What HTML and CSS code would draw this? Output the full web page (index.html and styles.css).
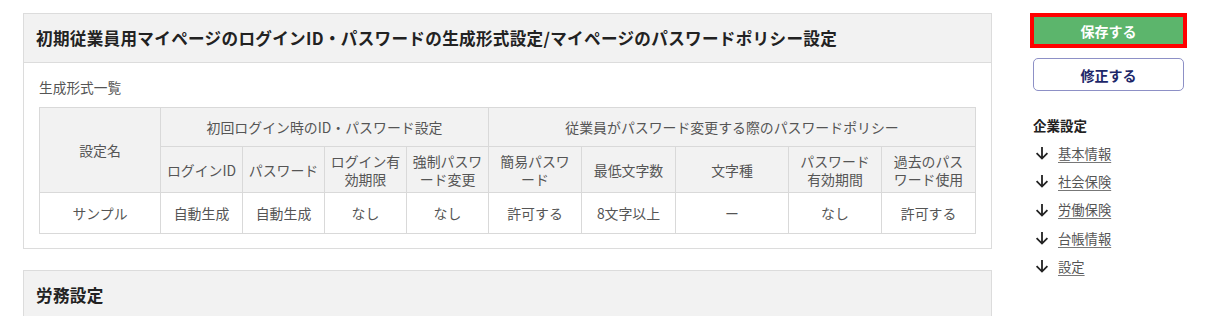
FILE: index.html
```html
<!DOCTYPE html>
<html lang="ja">
<head>
<meta charset="utf-8">
<link rel="stylesheet" href="styles.css">
</head>
<body>
<div class="page">
  <main class="main">
    <section class="card">
      <div class="card-head"><h2 class="card-title">初期従業員用マイページのログインID・パスワードの生成形式設定/マイページのパスワードポリシー設定</h2></div>
      <div class="card-body">
        <p class="label">生成形式一覧</p>
        <table class="tbl">
          <colgroup>
            <col style="width:121px"><col style="width:82px"><col style="width:82px"><col style="width:82px"><col style="width:82px">
            <col style="width:93px"><col style="width:94px"><col style="width:113px"><col style="width:93px"><col style="width:94px">
          </colgroup>
          <thead>
            <tr class="r1">
              <th rowspan="2">設定名</th>
              <th colspan="4">初回ログイン時のID・パスワード設定</th>
              <th colspan="5">従業員がパスワード変更する際のパスワードポリシー</th>
            </tr>
            <tr class="r2">
              <th>ログインID</th>
              <th>パスワード</th>
              <th>ログイン有<br>効期限</th>
              <th>強制パスワ<br>ード変更</th>
              <th>簡易パスワ<br>ード</th>
              <th>最低文字数</th>
              <th>文字種</th>
              <th>パスワード<br>有効期間</th>
              <th>過去のパス<br>ワード使用</th>
            </tr>
          </thead>
          <tbody>
            <tr class="r3">
              <td>サンプル</td>
              <td>自動生成</td>
              <td>自動生成</td>
              <td>なし</td>
              <td>なし</td>
              <td>許可する</td>
              <td>8文字以上</td>
              <td>ー</td>
              <td>なし</td>
              <td>許可する</td>
            </tr>
          </tbody>
        </table>
      </div>
    </section>
    <section class="card card2">
      <div class="card-head"><h2 class="card-title">労務設定</h2></div>
      <div class="card-body tall"></div>
    </section>
  </main>
  <aside class="side">
    <button class="btn-save" type="button">保存する</button>
    <button class="btn-edit" type="button">修正する</button>
    <h3 class="side-title">企業設定</h3>
    <ul class="side-links">
      <li><svg class="arr" viewBox="0 0 14 14" width="14" height="14"><path d="M7 1V12.6M1.6 7.2L7 12.6L12.4 7.2" fill="none" stroke="#222" stroke-width="1.8"/></svg><a href="#">基本情報</a></li>
      <li><svg class="arr" viewBox="0 0 14 14" width="14" height="14"><path d="M7 1V12.6M1.6 7.2L7 12.6L12.4 7.2" fill="none" stroke="#222" stroke-width="1.8"/></svg><a href="#">社会保険</a></li>
      <li><svg class="arr" viewBox="0 0 14 14" width="14" height="14"><path d="M7 1V12.6M1.6 7.2L7 12.6L12.4 7.2" fill="none" stroke="#222" stroke-width="1.8"/></svg><a href="#">労働保険</a></li>
      <li><svg class="arr" viewBox="0 0 14 14" width="14" height="14"><path d="M7 1V12.6M1.6 7.2L7 12.6L12.4 7.2" fill="none" stroke="#222" stroke-width="1.8"/></svg><a href="#">台帳情報</a></li>
      <li><svg class="arr" viewBox="0 0 14 14" width="14" height="14"><path d="M7 1V12.6M1.6 7.2L7 12.6L12.4 7.2" fill="none" stroke="#222" stroke-width="1.8"/></svg><a href="#">設定</a></li>
    </ul>
  </aside>
</div>
</body>
</html>
```

FILE: styles.css
```css
* { box-sizing: border-box; }
html, body { margin: 0; padding: 0; background: #fff; }
html { height: 316px; overflow: hidden; }
body {
  font-family: "Noto Sans CJK JP", "Noto Sans", sans-serif;
  color: #333;
  height: 316px;
  overflow: hidden;
}
.page {
  display: flex;
  align-items: flex-start;
  padding: 13px 0 0 23px;
  gap: 38px;
}
.main { width: 969px; flex: none; }
.card {
  border: 1px solid #dcdcdc;
  background: #fff;
}
.card2 { margin-top: 21px; }
.card-head {
  background: #f2f2f2;
  border-bottom: 1px solid #dcdcdc;
  height: 49px;
  display: flex;
  align-items: center;
  padding: 0 12px;
}
.card-title {
  margin: 0;
  font-size: 16.6px;
  font-weight: 700;
  color: #222;
  letter-spacing: 0.3px;
}
.card-body { padding: 14px 15px 14px 15px; }
.card-body.tall { height: 30px; }
.label {
  margin: 0 0 10px 0;
  font-size: 13.7px;
  line-height: 20px;
  color: #555;
}
.tbl {
  border-collapse: collapse;
  table-layout: fixed;
  width: 936px;
  font-size: 13.9px;
  color: #555;
}
.tbl th, .tbl td {
  border: 1px solid #d9d9d9;
  text-align: center;
  vertical-align: middle;
  font-weight: 400;
  padding: 0 2px;
  line-height: 18px;
}
.tbl th { background: #f2f2f2; }
.tbl td { background: #fff; }
.r1 th { height: 39px; }
.r2 th { height: 46px; }
.r3 td { height: 41px; }
.side {
  width: 157px;
  flex: none;
  display: flex;
  flex-direction: column;
}
.btn-save {
  display: block;
  width: 157px;
  height: 35px;
  background: #5cb56c;
  border: 4px solid #ff0000;
  color: #fff;
  font-family: inherit;
  font-size: 14px;
  font-weight: 700;
  padding: 0;
  cursor: pointer;
}
.btn-edit {
  display: block;
  width: 151px;
  height: 33px;
  margin: 10px 0 0 3px;
  background: #fff;
  border: 1px solid #8d90c6;
  border-radius: 5px;
  color: #1d2769;
  font-family: inherit;
  font-size: 14px;
  font-weight: 700;
  padding: 0;
}
.side-title {
  margin: 24px 0 0 3px;
  font-size: 13.5px;
  font-weight: 700;
  color: #222;
  line-height: 20px;
}
.side-links {
  list-style: none;
  margin: 4px 0 0 5px;
  padding: 0;
}
.side-links li {
  display: flex;
  align-items: center;
  height: 28.3px;
  gap: 9px;
}
.arr { flex: none; }
.side-links a {
  color: #555;
  font-size: 13.3px;
  text-decoration: underline;
  text-decoration-color: #777;
  text-underline-offset: 3px;
}
```
